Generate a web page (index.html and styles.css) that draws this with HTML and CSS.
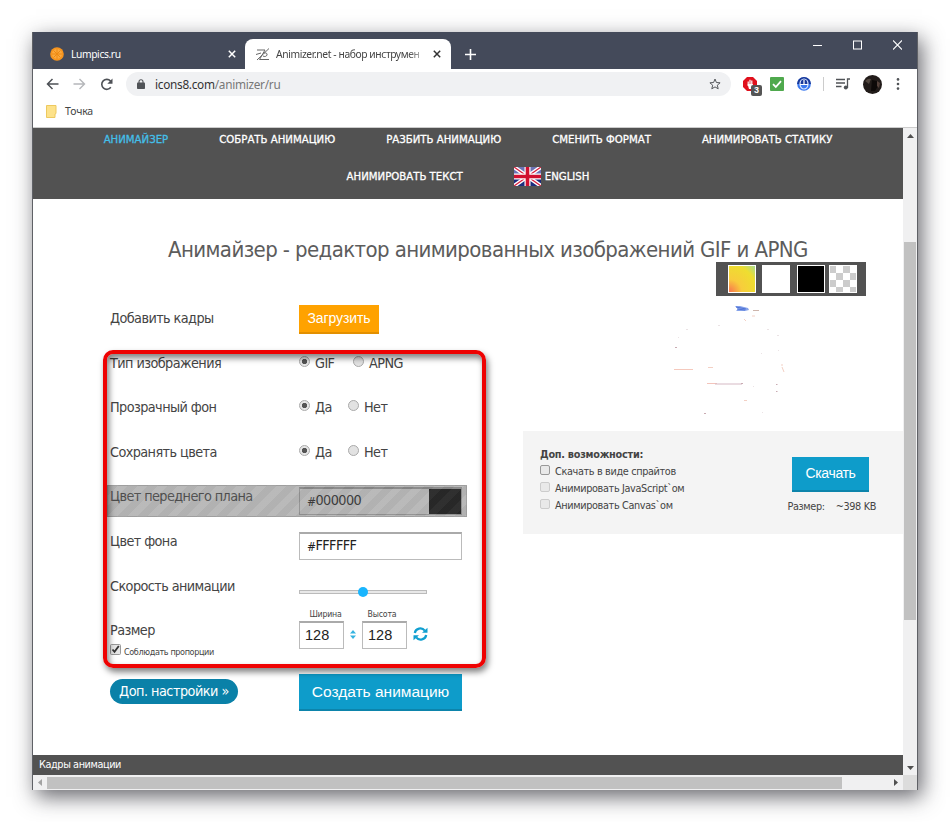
FILE: index.html
```
<!DOCTYPE html>
<html lang="ru">
<head>
    <meta charset="UTF-8">
    <title>Animizer.net - набор инструментов</title>
    <link rel="stylesheet" href="styles.css">
</head>
<body>
    <div class="window">
        <!-- Tabs -->
        <div class="titlebar">
            <div class="tab">
                <svg class="tab-icon" width="14" height="14" viewBox="0 0 14 14">
                    <circle cx="7" cy="7" r="6.8" fill="#f7941d"/>
                    <circle cx="7" cy="7" r="5" fill="#fba83c"/>
                    <path d="M7 2v10M2 7h10M3.5 3.5l7 7M10.500 3.500l-7 7" stroke="#ee8a12" stroke-width="1"/>
                </svg>
                <span class="tab-title">Lumpics.ru</span>
                <svg class="tab-close" width="8" height="8" viewBox="0 0 8 8"><path d="M.8.8l6.400 6.400M7.200.8L.8 7.200" stroke="#fff" stroke-width="1.500"/></svg>
            </div>
            <div class="tab active">
                <svg class="tab-icon" width="14" height="13" viewBox="0 0 14 13">
                    <path d="M1 2h8L3.500 11.500H13M0 6.500l5-1.500M8 5c2-.5 3.500.5 3 2s-2.500 2-4 1M13 .5L1 12" fill="none" stroke="#666" stroke-width="1"/>
                </svg>
                <span class="tab-title">Animizer.net - набор инструмен</span>
                <svg class="tab-close" width="8" height="8" viewBox="0 0 8 8"><path d="M.8.8l6.400 6.400M7.200.8L.8 7.200" stroke="#333" stroke-width="1.500"/></svg>
            </div>
            <svg class="new-tab" width="11" height="11" viewBox="0 0 11 11"><path d="M5.500 0v11M0 5.500h11" stroke="#fff" stroke-width="1.600"/></svg>
            <div class="window-buttons">
                <svg width="9" height="10" viewBox="0 0 9 10"><path d="M0 5.500h9" stroke="#fff"/></svg>
                <svg width="9" height="10" viewBox="0 0 9 10"><rect x=".5" y="1" width="8" height="8" fill="none" stroke="#fff"/></svg>
                <svg width="9" height="10" viewBox="0 0 9 10"><path d="M0 .5l9 9M9 .5l-9 9" stroke="#fff" stroke-width="1.100"/></svg>
            </div>
        </div>

        <!-- Address bar -->
        <div class="toolbar">
            <svg class="nav-icon" width="13" height="12" viewBox="0 0 13 12"><path d="M12.500 6H1.500M6.500 1l-5 5 5 5" fill="none" stroke="#4e5156" stroke-width="1.500"/></svg>
            <svg class="nav-icon" width="13" height="12" viewBox="0 0 13 12"><path d="M.5 6h11M6.500 1l5 5-5 5" fill="none" stroke="#b5b7ba" stroke-width="1.400"/></svg>
            <svg class="nav-icon" width="14" height="13" viewBox="0 0 14 13"><path d="M10.800 9.300A5 5 0 1 1 10.500 3l1 1.300" fill="none" stroke="#4e5156" stroke-width="1.600"/><path d="M12.500.5v5.200H7.300z" fill="#4e5156"/></svg>
            <div class="address">
                <svg width="8" height="10" viewBox="0 0 8 10"><rect y="3.500" width="8" height="6.500" rx=".8" fill="#505357"/><path d="M2 4V2.700a2 2 0 0 1 4 0V4" fill="none" stroke="#505357" stroke-width="1.100"/></svg>
                <span class="url">icons8.com<span class="path">/animizer/ru</span></span>
                <svg width="12" height="12" viewBox="0 0 12 12"><path d="M6 1l1.400 3.500 3.700.3-2.800 2.400.9 3.600L6 8.900l-3.200 1.900.9-3.600L.9 4.800l3.700-.3z" fill="none" stroke="#55585c"/></svg>
            </div>
            <div class="extensions">
                <div class="adblock">
                    <svg width="14" height="14" viewBox="0 0 14 14"><path d="M4 0h6l4 4v6l-4 4H4l-4-4V4z" fill="#e0101c"/><path d="M5.200 9V4.500M7 8V2.800M8.800 9V3.500" stroke="#fff" stroke-width="1.200"/><path d="M4.600 7h5.300v3L8 12H6z" fill="#fff"/></svg>
                    <span class="badge">3</span>
                </div>
                <svg width="14" height="14" viewBox="0 0 14 14"><rect width="14" height="14" rx="1" fill="#4fa94d"/><path d="M3 7.200l2.800 2.800L11 4.200" fill="none" stroke="#fff" stroke-width="1.800"/></svg>
                <svg width="14" height="14" viewBox="0 0 14 14"><circle cx="7" cy="7" r="6.800" fill="#3a78ee"/><path d="M0 7h14a7 7 0 0 0-14 0" fill="#17389a"/><ellipse cx="7" cy="7" rx="4" ry="5" fill="none" stroke="#dbe7ff" stroke-width="1.200"/><path d="M7 3v5M3 7.500h8" stroke="#fff" stroke-width="1.200"/></svg>
                <span class="separator"></span>
                <svg width="14" height="12" viewBox="0 0 14 12"><path d="M0 1.500h9M0 5h9M0 8.500h5.500M11.500 10V1h2.500" fill="none" stroke="#505357" stroke-width="1.300"/><circle cx="9.800" cy="9.500" r="2" fill="#505357"/></svg>
                <svg width="19" height="19" viewBox="0 0 19 19"><circle cx="9.500" cy="9.500" r="9.500" fill="#211b19"/><path d="M2 6q3-3 6-2L6 9z" fill="#51463f"/><path d="M9 5l5 1 1 5-3 5H8z" fill="#0d0908"/><path d="M14 6l3 2-1 5-2-2z" fill="#54413a"/></svg>
                <svg class="menu" width="4" height="12" viewBox="0 0 4 12"><g fill="#505357"><circle cx="2" cy="1.400" r="1.300"/><circle cx="2" cy="6" r="1.300"/><circle cx="2" cy="10.600" r="1.300"/></g></svg>
            </div>
        </div>

        <div class="bookmarks">
            <svg width="11" height="13" viewBox="0 0 11 13"><path d="M.5.500h9.500v8l-1 .5v3.500H.5z" fill="#fde28a" stroke="#edc95f"/></svg>
            <span>Точка</span>
        </div>

        <div class="viewport">
            <div class="page">
                <div class="nav">
                    <a class="current">АНИМАЙЗЕР</a>
                    <a>СОБРАТЬ АНИМАЦИЮ</a>
                    <a>РАЗБИТЬ АНИМАЦИЮ</a>
                    <a>СМЕНИТЬ ФОРМАТ</a>
                    <a>АНИМИРОВАТЬ СТАТИКУ</a>
                    <a>АНИМИРОВАТЬ ТЕКСТ</a>
                    <a class="lang">
                        <svg width="27" height="19" viewBox="0 0 27 19">
                            <rect width="27" height="19" fill="#1c2c7c"/>
                            <path d="M0 0h27v7H0z" fill="#6b72b4"/>
                            <path d="M0 0l27 19M27 0L0 19" stroke="#fff" stroke-width="4"/>
                            <path d="M0 0l27 19M27 0L0 19" stroke="#d8213f" stroke-width="1.300"/>
                            <path d="M13.500 0v19M0 9.500h27" stroke="#fff" stroke-width="6"/>
                            <path d="M13.500 0v19M0 9.500h27" stroke="#d0102f" stroke-width="3.600"/>
                        </svg>
                        <span>ENGLISH</span>
                    </a>
                </div>

                <h1><span>Анимайзер - редактор анимированных изображений GIF и APNG</span></h1>

                <div class="columns">
                    <div class="settings">
                        <div class="row">
                            <label>Добавить кадры</label>
                            <div class="upload">Загрузить</div>
                        </div>
                        <div class="row">
                            <label>Тип изображения</label>
                            <div class="radios"><i class="radio on"></i><span class="opt gif">GIF</span><i class="radio"></i><span class="opt">APNG</span></div>
                        </div>
                        <div class="row">
                            <label>Прозрачный фон</label>
                            <div class="radios"><i class="radio on"></i><span class="opt yes">Да</span><i class="radio"></i><span class="opt">Нет</span></div>
                        </div>
                        <div class="row">
                            <label>Сохранять цвета</label>
                            <div class="radios"><i class="radio on"></i><span class="opt yes">Да</span><i class="radio"></i><span class="opt">Нет</span></div>
                        </div>
                        <div class="row disabled">
                            <label>Цвет переднего плана</label>
                            <div class="color"><small>#</small><span>000000</span><b></b></div>
                        </div>
                        <div class="row">
                            <label>Цвет фона</label>
                            <div class="color"><small>#</small><span>FFFFFF</span></div>
                        </div>
                        <div class="row">
                            <label>Скорость анимации</label>
                            <div class="slider"><i></i></div>
                        </div>
                        <div class="row size">
                            <div>
                                <label>Размер</label>
                                <div class="keep">
                                    <svg width="11" height="11" viewBox="0 0 11 11"><rect x=".5" y=".5" width="10" height="10" rx="1" fill="#e6e6e6" stroke="#999"/><path d="M2.500 5.500l2 2.300L8.800 2" fill="none" stroke="#333" stroke-width="1.800"/></svg>
                                    <span>Соблюдать пропорции</span>
                                </div>
                            </div>
                            <div class="dims">
                                <div class="dim"><small>Ширина</small><div class="num">128</div></div>
                                <svg class="swap" width="6" height="9" viewBox="0 0 6 9"><path d="M3 0l3 3.500H0zM3 9L0 5.500h6z" fill="#35b3e0"/></svg>
                                <div class="dim second"><small>Высота</small><div class="num">128</div></div>
                                <svg class="refresh" width="15" height="14" viewBox="0 0 15 14"><path d="M1.800 6A5.600 5.300 0 0 1 11.800 3.600M13.200 8A5.600 5.300 0 0 1 3.200 10.400" fill="none" stroke="#109fd0" stroke-width="2.200"/><path d="M14.500.8v5H9zM.5 13.200v-5H6z" fill="#109fd0"/></svg>
                            </div>
                        </div>
                        <div class="actions">
                            <div class="more">Доп. настройки »</div>
                            <div class="create">Создать анимацию</div>
                        </div>
                    </div>

                    <div class="preview">
                        <div class="swatches">
                            <i class="sw gradient"></i><i class="sw white"></i><i class="sw black"></i><i class="sw checker"></i>
                        </div>
                        <svg class="frame" width="120" height="118" viewBox="0 0 120 118">
                            <path d="M65 6l5 0 8 2 1 2-4 1-9 0 2-2z" fill="#86a3ea"/>
                            <path d="M66 7l10 2M67 9l8 1" stroke="#5073d6"/>
                            <path d="M83 10.500h6" stroke="#cdb5ac"/>
                            <path d="M4 69.500h19" stroke="#f5c9bd"/>
                            <path d="M37 83.500h10" stroke="#f3c4bb"/>
                            <path d="M45 84h27" stroke="#d5b9c4"/>
                            <path d="M38 67.500h5M74 19l2 2M82 16h3M112 64v2M112 67l2 5M74 100.500h3" stroke="#f3d0c4"/>
                            <path d="M5 47.500h2M106 84.500h1.500M106 91.500h1.500M34 113.500h2M71 83.500h2" stroke="#c9abb2"/>
                            <path d="M16 29.500h2M48 25.500h2M107 35.500h2M97 29.500h2M8 37.500h1M83 86.500h1M108 50.500h1M91 53.500h1M92 112.500h1" stroke="#ebe3e5"/>
                        </svg>
                        <div class="extra">
                            <div class="checks">
                                <strong>Доп. возможности:</strong>
                                <div><i></i><span>Скачать в виде спрайтов</span></div>
                                <div class="off"><i></i><span>Анимировать JavaScript`ом</span></div>
                                <div class="off"><i></i><span>Анимировать Canvas`ом</span></div>
                            </div>
                            <div class="download">
                                <div class="get">Скачать</div>
                                <div class="filesize"><span>Размер:</span><span>~398 KB</span></div>
                            </div>
                        </div>
                    </div>
                </div>

                <div class="highlight"></div>
                <div class="frames">Кадры анимации</div>
            </div>

            <div class="vscroll">
                <svg width="7" height="4" viewBox="0 0 7 4"><path d="M3.500 0L7 4H0z" fill="#505050"/></svg>
                <i></i>
                <svg width="7" height="4" viewBox="0 0 7 4"><path d="M0 0h7L3.500 4z" fill="#505050"/></svg>
            </div>
            <div class="hscroll">
                <svg width="4" height="7" viewBox="0 0 4 7"><path d="M4 0v7L0 3.500z" fill="#a3a3a3"/></svg>
                <i></i>
                <svg width="4" height="7" viewBox="0 0 4 7"><path d="M0 0v7l4-3.500z" fill="#505050"/></svg>
            </div>
            <div class="corner"></div>
        </div>
    </div>
</body>
</html>
```
FILE: styles.css
```
*,
*::after {
    box-sizing: border-box;
}
body {
    margin: 0;
    padding: 32px;
    height: 822px;
    overflow: hidden;
    background: #fff;
    font-family: "DejaVu Sans Condensed", "DejaVu Sans", sans-serif;
    font-stretch: condensed;
    color: #444;
    white-space: nowrap;
}
svg {
    display: block;
    flex: none;
}
.window {
    width: 886px;
    height: 758px;
    border: 1px solid #5f6166;
    border-top: 0;
    background: #fff;
    box-shadow: 4px 7px 20px rgba(40, 40, 48, 0.7);
}

/* Browser chrome */
.titlebar {
    display: flex;
    height: 37px;
    padding-top: 7px;
    background: #444a5a;
}
.tab,
.tab-title,
.url,
.bookmarks {
    font-family: "Noto Sans", sans-serif;
    font-stretch: normal;
}
.tab {
    display: flex;
    align-items: center;
    width: 212px;
    padding: 0 9px 0 17px;
    font-size: 10.3px;
    letter-spacing: -0.4px;
    color: #fff;
}
.tab.active {
    width: 206px;
    padding: 0 10px 0 11px;
    background: #fff;
    border-radius: 8px 8px 0 0;
    color: #444;
}
.tab-title {
    flex: 1;
    margin-left: 7px;
}
.active .tab-title {
    margin-left: 6px;
    margin-right: 7px;
    -webkit-mask-image: linear-gradient(90deg, #000 88%, rgba(0, 0, 0, 0.2));
    mask-image: linear-gradient(90deg, #000 88%, rgba(0, 0, 0, 0.2));
}
.new-tab {
    margin: 10px 0 0 14px;
}
.window-buttons {
    display: flex;
    gap: 31px;
    margin: 1px 15px 0 auto;
}
.toolbar {
    display: flex;
    align-items: center;
    height: 30px;
    padding-left: 13px;
}
.nav-icon {
    margin-right: 14px;
}
.address {
    display: flex;
    align-items: center;
    width: 605px;
    height: 24px;
    margin-left: -2px;
    padding: 0 10px 0 11px;
    border-radius: 12px;
    background: #f0f1f3;
}
.url {
    flex: 1;
    margin-left: 10px;
    font-size: 11.8px;
    letter-spacing: -0.28px;
    color: #333;
}
.url .path {
    color: #777;
}
.extensions {
    display: flex;
    align-items: center;
    gap: 13px;
    margin-left: 12px;
}
.extensions .separator {
    margin: 0 -1px;
}
.extensions .menu {
    margin-left: 1px;
}
.adblock {
    position: relative;
}
.badge {
    position: absolute;
    left: 8px;
    top: 8px;
    width: 11px;
    height: 11px;
    border-radius: 2px;
    background: #555;
    color: #fff;
    font: bold 9px/11px "Liberation Sans", sans-serif;
    text-align: center;
}
.separator {
    width: 1px;
    height: 14px;
    background: #ccc;
}
.bookmarks {
    display: flex;
    align-items: center;
    gap: 8px;
    height: 28px;
    padding: 0 0 4px 13px;
    font-size: 10.5px;
    letter-spacing: -0.2px;
    color: #444;
}

/* Page area and scrollbars */
.viewport {
    display: grid;
    grid-template-columns: 870px 14px;
    grid-template-rows: 647px 15px;
    border-top: 1px solid #ccc;
}
.page {
    position: relative;
    display: flex;
    flex-direction: column;
}
.vscroll {
    display: flex;
    flex-direction: column;
    align-items: center;
    padding: 6px 0 5px;
    background: #f0f0f1;
}
.vscroll i {
    width: 12px;
    height: 378px;
    margin: 104px 0 auto;
    background: #c1c1c1;
}
.hscroll {
    display: flex;
    align-items: center;
    padding: 0 5px 0 5px;
    background: #f0f0f1;
}
.hscroll i {
    width: 795px;
    height: 12px;
    margin: 0 auto 0 5px;
    background: #c1c1c1;
}
.corner {
    background: #dcdcdc;
}

/* Site menu */
.nav {
    display: flex;
    flex-wrap: wrap;
    justify-content: center;
    align-content: flex-start;
    column-gap: 51px;
    height: 71px;
    background: #525252;
    color: #fff;
    font-size: 11.3px;
    -webkit-text-stroke: 0.3px;
}
.nav a {
    height: 24px;
    margin-bottom: 12.5px;
    line-height: 24px;
}
.nav .current {
    color: #44bfe8;
}
.nav .lang {
    display: flex;
    align-items: center;
    gap: 4px;
}
h1 {
    height: 63px;
    margin: 0;
    padding-left: 135px;
    font-size: 22px;
    font-weight: normal;
    letter-spacing: -0.6px;
    line-height: 102px;
    color: #5c5c5c;
}
.columns {
    display: grid;
    grid-template-columns: 490px 380px;
}

/* Settings form */
.settings {
    padding: 34px 0 0 77px;
}
.row {
    display: grid;
    grid-template-columns: 189px 163px;
    height: 44.6px;
    line-height: 44px;
    font-size: 14.3px;
    letter-spacing: -0.58px;
}
.upload {
    width: 80px;
    height: 29px;
    margin-top: 9px;
    background: #ffa200;
    border-bottom: 2px solid #e39000;
    color: #fff;
    font: 14px/26px "Liberation Sans", sans-serif;
    letter-spacing: -0.1px;
    text-align: center;
}
.radios {
    display: flex;
}
.radio {
    width: 11px;
    height: 11px;
    margin-top: 15px;
    border: 1px solid #aaa;
    border-radius: 50%;
    background: #e2e2e2;
}
.radio.on {
    background: radial-gradient(circle, #555 0 2.3px, #e6e6e6 3px);
}
.opt {
    margin-left: 5px;
}
.opt.gif {
    width: 38px;
}
.opt.yes {
    width: 33px;
}
.color {
    display: flex;
    width: 163px;
    height: 28px;
    margin-top: 13px;
    padding-left: 7px;
    border: 1px solid #bbb;
    border-top: 2px solid #aaa;
    background: #fff;
    line-height: 23px;
    color: #222;
}
.color small {
    font-size: 12px;
    line-height: 27px;
}
.color b {
    width: 32px;
    margin-left: auto;
    background: #000;
}
.disabled {
    position: relative;
}
/* Striped veil over the row that cannot be edited */
.disabled::after {
    content: "";
    position: absolute;
    left: -3px;
    top: 10.6px;
    width: 360px;
    height: 32px;
    border: 1px solid rgba(140, 140, 140, 0.5);
    background: repeating-linear-gradient(135deg, rgba(86, 86, 86, 0.46) 0 7px, rgba(104, 104, 104, 0.46) 7px 14px);
}
.slider {
    width: 128px;
    height: 4px;
    margin-top: 26px;
    border: 1px solid #bbb;
    background: #e8e8e8;
}
.slider i {
    display: block;
    width: 10px;
    height: 10px;
    margin: -4px 0 0 58px;
    border-radius: 50%;
    background: #19b5fe;
}
.size label {
    display: block;
    height: 36px;
}
.keep {
    display: flex;
    gap: 3px;
    font-size: 9px;
    letter-spacing: -0.38px;
    line-height: 17px;
}
.dims {
    display: flex;
    letter-spacing: 0;
}
.dim {
    width: 45px;
    text-align: center;
}
.dim small {
    display: block;
    height: 13px;
    padding-left: 8px;
    font-size: 8.7px;
    letter-spacing: -0.2px;
    line-height: 12px;
}
.dim.second small {
    padding-left: 0;
    margin-left: -5px;
}
.num {
    height: 28px;
    padding-left: 5px;
    border: 1px solid #bbb;
    border-top: 2px solid #aaa;
    background: #fff;
    color: #222;
    font: 14.5px/24px "Liberation Sans", sans-serif;
    text-align: left;
}
.swap {
    margin: 22px 6px 0;
}
.refresh {
    margin: 19px 0 0 6px;
}
.actions {
    display: grid;
    grid-template-columns: 189px 163px;
    align-items: start;
    margin-top: 21px;
}
.more {
    width: 128px;
    height: 25px;
    margin-top: 5px;
    border-radius: 13px;
    background: #0a81a8;
    color: #fff;
    font-size: 14.300px;
    letter-spacing: -0.5px;
    line-height: 25px;
    text-align: center;
}
.create,
.get {
    background: #0e9cca;
    border-bottom: 2px solid #0c84ab;
    color: #fff;
    font: 15.5px/35px "Liberation Sans", sans-serif;
    text-align: center;
}
.create {
    height: 37px;
}

/* Preview column */
.swatches {
    display: flex;
    align-items: center;
    width: 150px;
    height: 34px;
    margin-left: 193px;
    padding-left: 12px;
    gap: 6px;
    background: #525252;
}
.sw {
    width: 28px;
    height: 28px;
    border: 1px solid #fff;
}
.gradient {
    background: radial-gradient(circle at 0 100%, #f8724e, #f8cc3c 35%, #eede30 75%, #a8dc90);
}
.white {
    background: #fff;
}
.black {
    margin-left: 1px;
    background: #000;
}
.checker {
    margin-left: -2px;
    background: repeating-conic-gradient(#ccc 0 25%, #fff 0 50%) 6px 0 / 14px 14px;
}
.frame {
    margin: 4px 0 13px 147px;
}
.extra {
    display: flex;
    height: 103px;
    padding: 16px 27px 0 17px;
    background: #f4f4f4;
    font-size: 10.8px;
    letter-spacing: -0.35px;
}
.checks {
    flex: 1;
}
.checks strong {
    display: block;
    height: 15px;
    line-height: 16px;
    letter-spacing: -0.25px;
}
.checks div {
    display: flex;
    height: 17.2px;
    gap: 5px;
    line-height: 20px;
}
.checks i {
    width: 10px;
    height: 10px;
    margin-top: 3px;
    border: 1px solid #999;
    border-radius: 2px;
    background: #e9e9e9;
}
.checks .off i {
    border-color: #ccc;
}
.get {
    width: 77px;
    height: 35px;
    margin: 10px 7px 0 auto;
    font-size: 14px;
    line-height: 32px;
}
.filesize {
    display: flex;
    gap: 11px;
    margin-top: 7px;
    line-height: 15px;
}

/* Outlined block of options */
.highlight {
    position: absolute;
    left: 70px;
    top: 222px;
    width: 383px;
    height: 318px;
    border: 4px solid #ee0202;
    border-radius: 10px;
    box-shadow: 2px 4px 6px rgba(0, 0, 0, 0.5), inset 2px 4px 6px rgba(0, 0, 0, 0.5);
}
.frames {
    height: 20px;
    margin-top: auto;
    padding-left: 6px;
    background: #525252;
    color: #fff;
    font-size: 10.8px;
    letter-spacing: -0.4px;
    line-height: 20px;
}
```
